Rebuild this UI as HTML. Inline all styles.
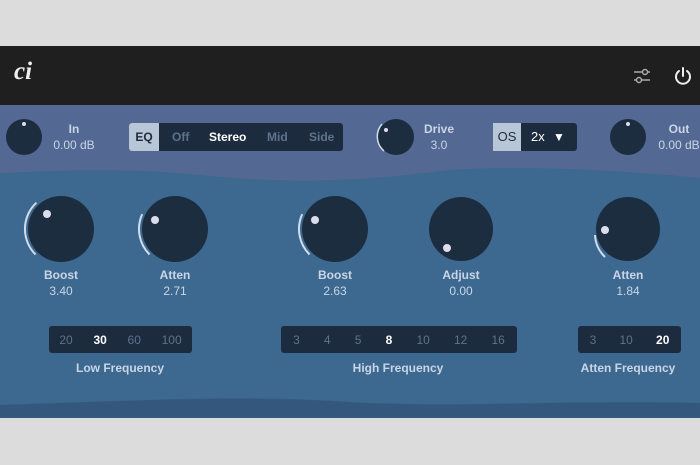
<!DOCTYPE html><html><head><style>
body{margin:0;width:700px;height:465px;background:#dcdcdc;position:relative;overflow:hidden;font-family:"Liberation Sans",sans-serif}
.a{position:absolute}
.t{position:absolute;color:#c9d6e6;font-size:12px;text-align:center;width:80px;font-weight:bold;line-height:16px}
.v{font-weight:normal}
.seg{position:absolute;background:#1c2b3d;border-radius:3px;height:27px;top:326px;display:flex;justify-content:space-around;align-items:center;font-size:12px;color:#5e738c}
.seg b{color:#fff}
</style></head><body>
<div class="a" style="left:0;top:46px;width:700px;height:60px;background:#1f1f1f"></div>
<div class="a" style="left:14px;top:58px;font-family:'Liberation Serif',serif;font-style:italic;font-weight:bold;font-size:25px;color:#eee">ci</div>
<svg class="a" style="left:632px;top:66px" width="20" height="20" viewBox="0 0 20 20" fill="none" stroke="#aaa" stroke-width="1.5"><line x1="2" y1="6" x2="18" y2="6"/><line x1="2" y1="14" x2="18" y2="14"/><circle cx="13" cy="6" r="2.5" fill="#1f1f1f"/><circle cx="7" cy="14" r="2.5" fill="#1f1f1f"/></svg>
<svg class="a" style="left:673px;top:66px" width="20" height="20" viewBox="0 0 20 20" fill="none" stroke="#eee" stroke-width="2" stroke-linecap="round"><path d="M6 5 A7 7 0 1 0 14 5"/><line x1="10" y1="2" x2="10" y2="10"/></svg>
<svg class="a" style="left:0;top:105px" width="700" height="313">
<rect width="700" height="313" fill="#3d6890"/>
<path d="M0 0H700V73C620 65 520 60 450 65C350 78 280 78 200 70C120 62 50 66 0 68Z" fill="#536892"/>
<path d="M0 300C150 295 250 290 350 297C450 303 550 295 700 298V313H0Z" fill="#34587d"/>
</svg>
<svg class="a" style="left:0;top:105px" width="700" height="313" fill="#1c2d40">
<circle cx="24" cy="32" r="18"/><circle cx="24" cy="19" r="2" fill="#dde"/>
<circle cx="396" cy="32" r="18"/><circle cx="386" cy="25" r="2" fill="#dde"/><path d="M384 46A19 19 0 0 1 382 19" stroke="#d0dcea" stroke-width="1.5" fill="none"/>
<circle cx="628" cy="32" r="18"/><circle cx="628" cy="19" r="2" fill="#dde"/>
<g stroke="#d0dcea" stroke-width="2" fill="none">
<path d="M35.5 149.5A36 36 0 0 1 36.4 97.7"/><path d="M149.5 149.5A36 36 0 0 1 142.2 109.2"/><path d="M309.5 149.5A36 36 0 0 1 302.2 109.2"/><path d="M605 152A33 33 0 0 1 595 130"/></g>
<circle cx="61" cy="124" r="33"/><circle cx="47" cy="109" r="4" fill="#dde"/>
<circle cx="175" cy="124" r="33"/><circle cx="155" cy="115" r="4" fill="#dde"/>
<circle cx="335" cy="124" r="33"/><circle cx="315" cy="115" r="4" fill="#dde"/>
<circle cx="461" cy="124" r="32"/><circle cx="447" cy="143" r="4" fill="#dde"/>
<circle cx="628" cy="124" r="32"/><circle cx="605" cy="125" r="4" fill="#dde"/>
</svg>
<div class="t" style="left:34px;top:121px">In<br><span class="v">0.00 dB</span></div>
<div class="t" style="left:399px;top:121px">Drive<br><span class="v">3.0</span></div>
<div class="t" style="left:639px;top:121px">Out<br><span class="v">0.00 dB</span></div>
<div class="a" style="left:129px;top:123px;width:214px;height:28px;background:#1c2b3d;border-radius:3px;font-size:12px;font-weight:bold;color:#5e738c;line-height:28px">
<span class="a" style="left:0;width:30px;height:28px;background:#b8c6d8;color:#1c2b3d;text-align:center;border-radius:3px 0 0 3px">EQ</span>
<span class="a" style="left:43px">Off</span><span class="a" style="left:80px;color:#fff">Stereo</span><span class="a" style="left:138px">Mid</span><span class="a" style="left:180px">Side</span></div>
<div class="a" style="left:493px;top:123px;width:84px;height:28px;background:#1c2b3d;border-radius:3px;font-size:13px;color:#fff;line-height:28px">
<span class="a" style="left:0;width:28px;height:28px;background:#b8c6d8;color:#1c2b3d;text-align:center">OS</span>
<span class="a" style="left:38px">2x</span><span class="a" style="left:60px;font-size:12px">▼</span></div>
<div class="t" style="left:21px;top:267px">Boost<br><span class="v">3.40</span></div>
<div class="t" style="left:135px;top:267px">Atten<br><span class="v">2.71</span></div>
<div class="t" style="left:295px;top:267px">Boost<br><span class="v">2.63</span></div>
<div class="t" style="left:421px;top:267px">Adjust<br><span class="v">0.00</span></div>
<div class="t" style="left:588px;top:267px">Atten<br><span class="v">1.84</span></div>
<div class="seg" style="left:49px;width:143px"><span>20</span><b>30</b><span>60</span><span>100</span></div>
<div class="seg" style="left:281px;width:236px"><span>3</span><span>4</span><span>5</span><b>8</b><span>10</span><span>12</span><span>16</span></div>
<div class="seg" style="left:578px;width:103px"><span>3</span><span>10</span><b>20</b></div>
<div class="t" style="left:60px;top:360px;width:120px">Low Frequency</div>
<div class="t" style="left:338px;top:360px;width:120px">High Frequency</div>
<div class="t" style="left:568px;top:360px;width:120px">Atten Frequency</div>
</body></html>
